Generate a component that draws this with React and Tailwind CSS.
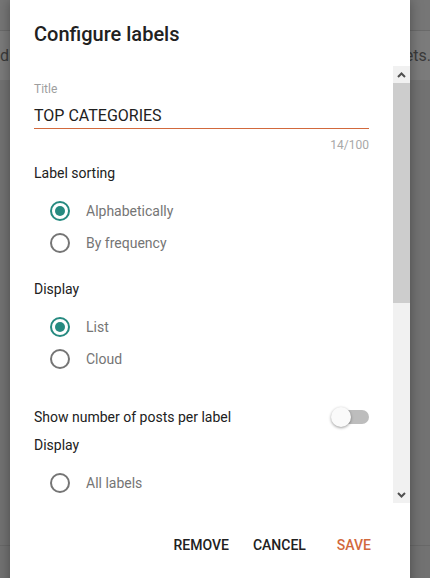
import React from "react";

function Radio({ checked, label }) {
  return (
    <div className="flex items-center h-8 pl-4">
      <span
        className={
          checked
            ? "w-5 h-5 rounded-full border-2 border-[#268a80] flex items-center justify-center"
            : "w-5 h-5 rounded-full border-2 border-[#757575]"
        }
      >
        {checked && <span className="w-2.5 h-2.5 rounded-full bg-[#268a80]" />}
      </span>
      <span className="ml-4 text-sm text-[#757575]">{label}</span>
    </div>
  );
}

function Chevron({ up }) {
  return (
    <svg width="9" height="6" viewBox="0 0 9 6">
      <polyline
        points={up ? "1,5 4.5,1.5 8,5" : "1,1 4.5,4.5 8,1"}
        fill="none"
        stroke="#505050"
        strokeWidth="2"
      />
    </svg>
  );
}

export default function App() {
  return (
    <div className="relative w-[430px] h-[578px] overflow-hidden bg-[#727272] font-['Roboto',sans-serif]">
      {/* page behind the overlay */}
      <div className="h-[31px] bg-[#767676] border-b border-[#6a6a6a]" />
      <div className="h-[49px] bg-[#7b7b7b] flex items-center justify-between text-base text-[#3a3a3a]">
        <span>dit</span>
        <span className="-mr-[1px]">gadgets.</span>
      </div>
      <div className="h-[465px]" />
      <div className="border-t border-[#686868]" />

      {/* dialog */}
      <div className="absolute left-[10px] top-0 w-[400px] h-[600px] bg-white shadow-[0_0_12px_rgba(0,0,0,0.35)] flex flex-col">
        <div className="h-[66px] px-6 pt-[20px]">
          <h2 className="text-xl leading-7 font-medium text-[#212121]">Configure labels</h2>
        </div>

        <div className="flex h-[437px]">
          <div className="flex-1 overflow-hidden pl-6 pr-6 text-[#212121]">
            <div className="pt-[15px] text-xs leading-4 text-[#9e9e9e]">Title</div>
            <div className="mt-[7px] h-[25px] border-b border-[#d2693c] text-base leading-6">
              TOP CATEGORIES
            </div>
            <div className="mt-[8px] text-xs leading-4 text-right text-[#a8a8a8]">14/100</div>

            <div className="mt-[10px] text-sm leading-5">Label sorting</div>
            <div className="mt-3">
              <Radio checked label="Alphabetically" />
              <Radio label="By frequency" />
            </div>

            <div className="mt-5 text-sm leading-5">Display</div>
            <div className="mt-3">
              <Radio checked label="List" />
              <Radio label="Cloud" />
            </div>

            <div className="mt-8 flex items-center justify-between h-5">
              <span className="text-sm">Show number of posts per label</span>
              <span className="relative w-[38px] h-5 flex items-center">
                <span className="ml-[9px] w-[29px] h-[14px] rounded-full bg-[#bdbdbd]" />
                <span className="absolute left-0 top-0 w-5 h-5 rounded-full bg-[#fafafa] shadow-[0_1px_3px_rgba(0,0,0,0.4)]" />
              </span>
            </div>

            <div className="mt-2 text-sm leading-5">Display</div>
            <div className="mt-3">
              <Radio label="All labels" />
            </div>
          </div>

          {/* scrollbar */}
          <div className="w-[17px] flex flex-col bg-[#f1f1f1]">
            <div className="h-[17px] flex items-center justify-center">
              <Chevron up />
            </div>
            <div className="h-[220px] bg-[#cdcdcd]" />
            <div className="flex-1" />
            <div className="h-[17px] flex items-center justify-center">
              <Chevron />
            </div>
          </div>
        </div>

        <div className="h-[84px] flex items-start justify-end pt-[32px] pr-[27px] text-sm font-medium">
          <button className="px-3 h-5 leading-5 text-[#212121]">REMOVE</button>
          <button className="px-3 h-5 leading-5 text-[#212121]">CANCEL</button>
          <button className="ml-[7px] px-3 h-5 leading-5 text-[#d2693c]">SAVE</button>
        </div>
      </div>
    </div>
  );
}
